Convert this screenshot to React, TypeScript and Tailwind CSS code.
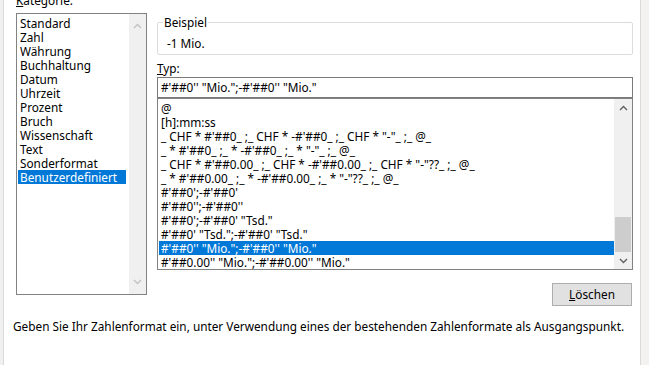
const categories = [
  "Standard",
  "Zahl",
  "Währung",
  "Buchhaltung",
  "Datum",
  "Uhrzeit",
  "Prozent",
  "Bruch",
  "Wissenschaft",
  "Text",
  "Sonderformat",
  "Benutzerdefiniert",
];

const formats = [
  "@",
  "[h]:mm:ss",
  `_ CHF * #'##0_ ;_ CHF * -#'##0_ ;_ CHF * "-"_ ;_ @_`,
  `_ * #'##0_ ;_ * -#'##0_ ;_ * "-"_ ;_ @_`,
  `_ CHF * #'##0.00_ ;_ CHF * -#'##0.00_ ;_ CHF * "-"??_ ;_ @_`,
  `_ * #'##0.00_ ;_ * -#'##0.00_ ;_ * "-"??_ ;_ @_`,
  `#'##0';-#'##0'`,
  `#'##0'';-#'##0''`,
  `#'##0';-#'##0' "Tsd."`,
  `#'##0' "Tsd.";-#'##0' "Tsd."`,
  `#'##0'' "Mio.";-#'##0'' "Mio."`,
  `#'##0.00'' "Mio.";-#'##0.00'' "Mio."`,
];

function Chevron({ up, className }: { up?: boolean; className: string }) {
  return (
    <svg width="9" height="6" viewBox="0 0 9 6" className={className}>
      <path
        d={up ? "M1 5 L4.5 1.5 L8 5" : "M1 1 L4.5 4.5 L8 1"}
        fill="none"
        stroke="currentColor"
        strokeWidth="1.4"
      />
    </svg>
  );
}

export default function App() {
  return (
    <div className="w-[649px] h-[365px] bg-[#f0f0f0] flex overflow-hidden font-['Segoe_UI','Noto_Sans',sans-serif] text-[11.8px] text-black">
      <div className="w-[4px] border-r border-[#dadada]" />
      <div className="w-[636px] bg-white flex flex-col">
        <div className="flex pl-[12px]">
          {/* Kategorie */}
          <div className="w-[131px] flex flex-col">
            <div className="-mt-[6px] h-[13px] leading-[13px]">
              <span className="underline underline-offset-1">K</span>ategorie:
            </div>
            <div className="mt-[6px] h-[282px] border border-[#828282] flex">
              <div className="flex-1 pl-[1px] pt-[2px]">
                {categories.map((c) => (
                  <div
                    key={c}
                    className={
                      c === "Benutzerdefiniert"
                        ? "h-[14px] leading-[14px] px-[2px] mr-[3px] bg-[#0078d7] text-white"
                        : "h-[14px] leading-[14px] px-[2px]"
                    }
                  >
                    {c}
                  </div>
                ))}
              </div>
              <div className="w-[17px] bg-[#f0f0f0] flex flex-col justify-between items-center py-[9px]">
                <Chevron up className="text-[#c2c2c2]" />
                <Chevron className="text-[#c2c2c2]" />
              </div>
            </div>
          </div>

          {/* right side */}
          <div className="ml-[10px] w-[476px] flex flex-col">
            <div className="mt-[22px] h-[33px] border border-[#dcdcdc] rounded-[2px] relative">
              <span className="absolute -top-[8px] left-[5px] bg-white px-[1px] leading-[14px]">
                Beispiel
              </span>
              <div className="pl-[9px] pt-[13px] leading-[14px]">-1 Mio.</div>
            </div>
            <div className="mt-[7px] h-[13px] leading-[13px]">
              <span className="underline underline-offset-1">T</span>yp:
            </div>
            <div className="mt-[2px] h-[21px] border border-[#7a7a7a] pl-[3px] leading-[19px]">
              {`#'##0'' "Mio.";-#'##0'' "Mio."`}
            </div>
            <div className="h-[172px] border border-[#828282] flex">
              <div className="flex-1 pl-[1px] pt-[2px] whitespace-pre">
                {formats.map((f, i) => (
                  <div
                    key={i}
                    className={
                      i === 10
                        ? "h-[14px] leading-[14px] px-[2px] bg-[#0078d7] text-white"
                        : "h-[14px] leading-[14px] px-[2px]"
                    }
                  >
                    {f}
                  </div>
                ))}
              </div>
              <div className="w-[18px] bg-[#f0f0f0] flex flex-col items-center">
                <div className="h-[17px] flex items-center justify-center">
                  <Chevron up className="text-[#606060]" />
                </div>
                <div className="flex-1 w-full flex flex-col justify-end px-[1px]">
                  <div className="h-[35px] bg-[#cdcdcd]" />
                </div>
                <div className="h-[17px] flex items-center justify-center">
                  <Chevron className="text-[#606060]" />
                </div>
              </div>
            </div>
            <div className="mt-[13px] flex justify-end pr-[1px]">
              <button className="w-[80px] h-[23px] bg-[#e1e1e1] border border-[#adadad] leading-[21px]">
                <span className="underline underline-offset-1">L</span>öschen
              </button>
            </div>
          </div>
        </div>
        <div className="mt-[13px] pl-[9px] h-[14px] leading-[14px]">
          Geben Sie Ihr Zahlenformat ein, unter Verwendung eines der bestehenden Zahlenformate als Ausgangspunkt.
        </div>
      </div>
      <div className="flex-1 border-l border-[#dadada] bg-[#f3f2f0]" />
    </div>
  );
}
